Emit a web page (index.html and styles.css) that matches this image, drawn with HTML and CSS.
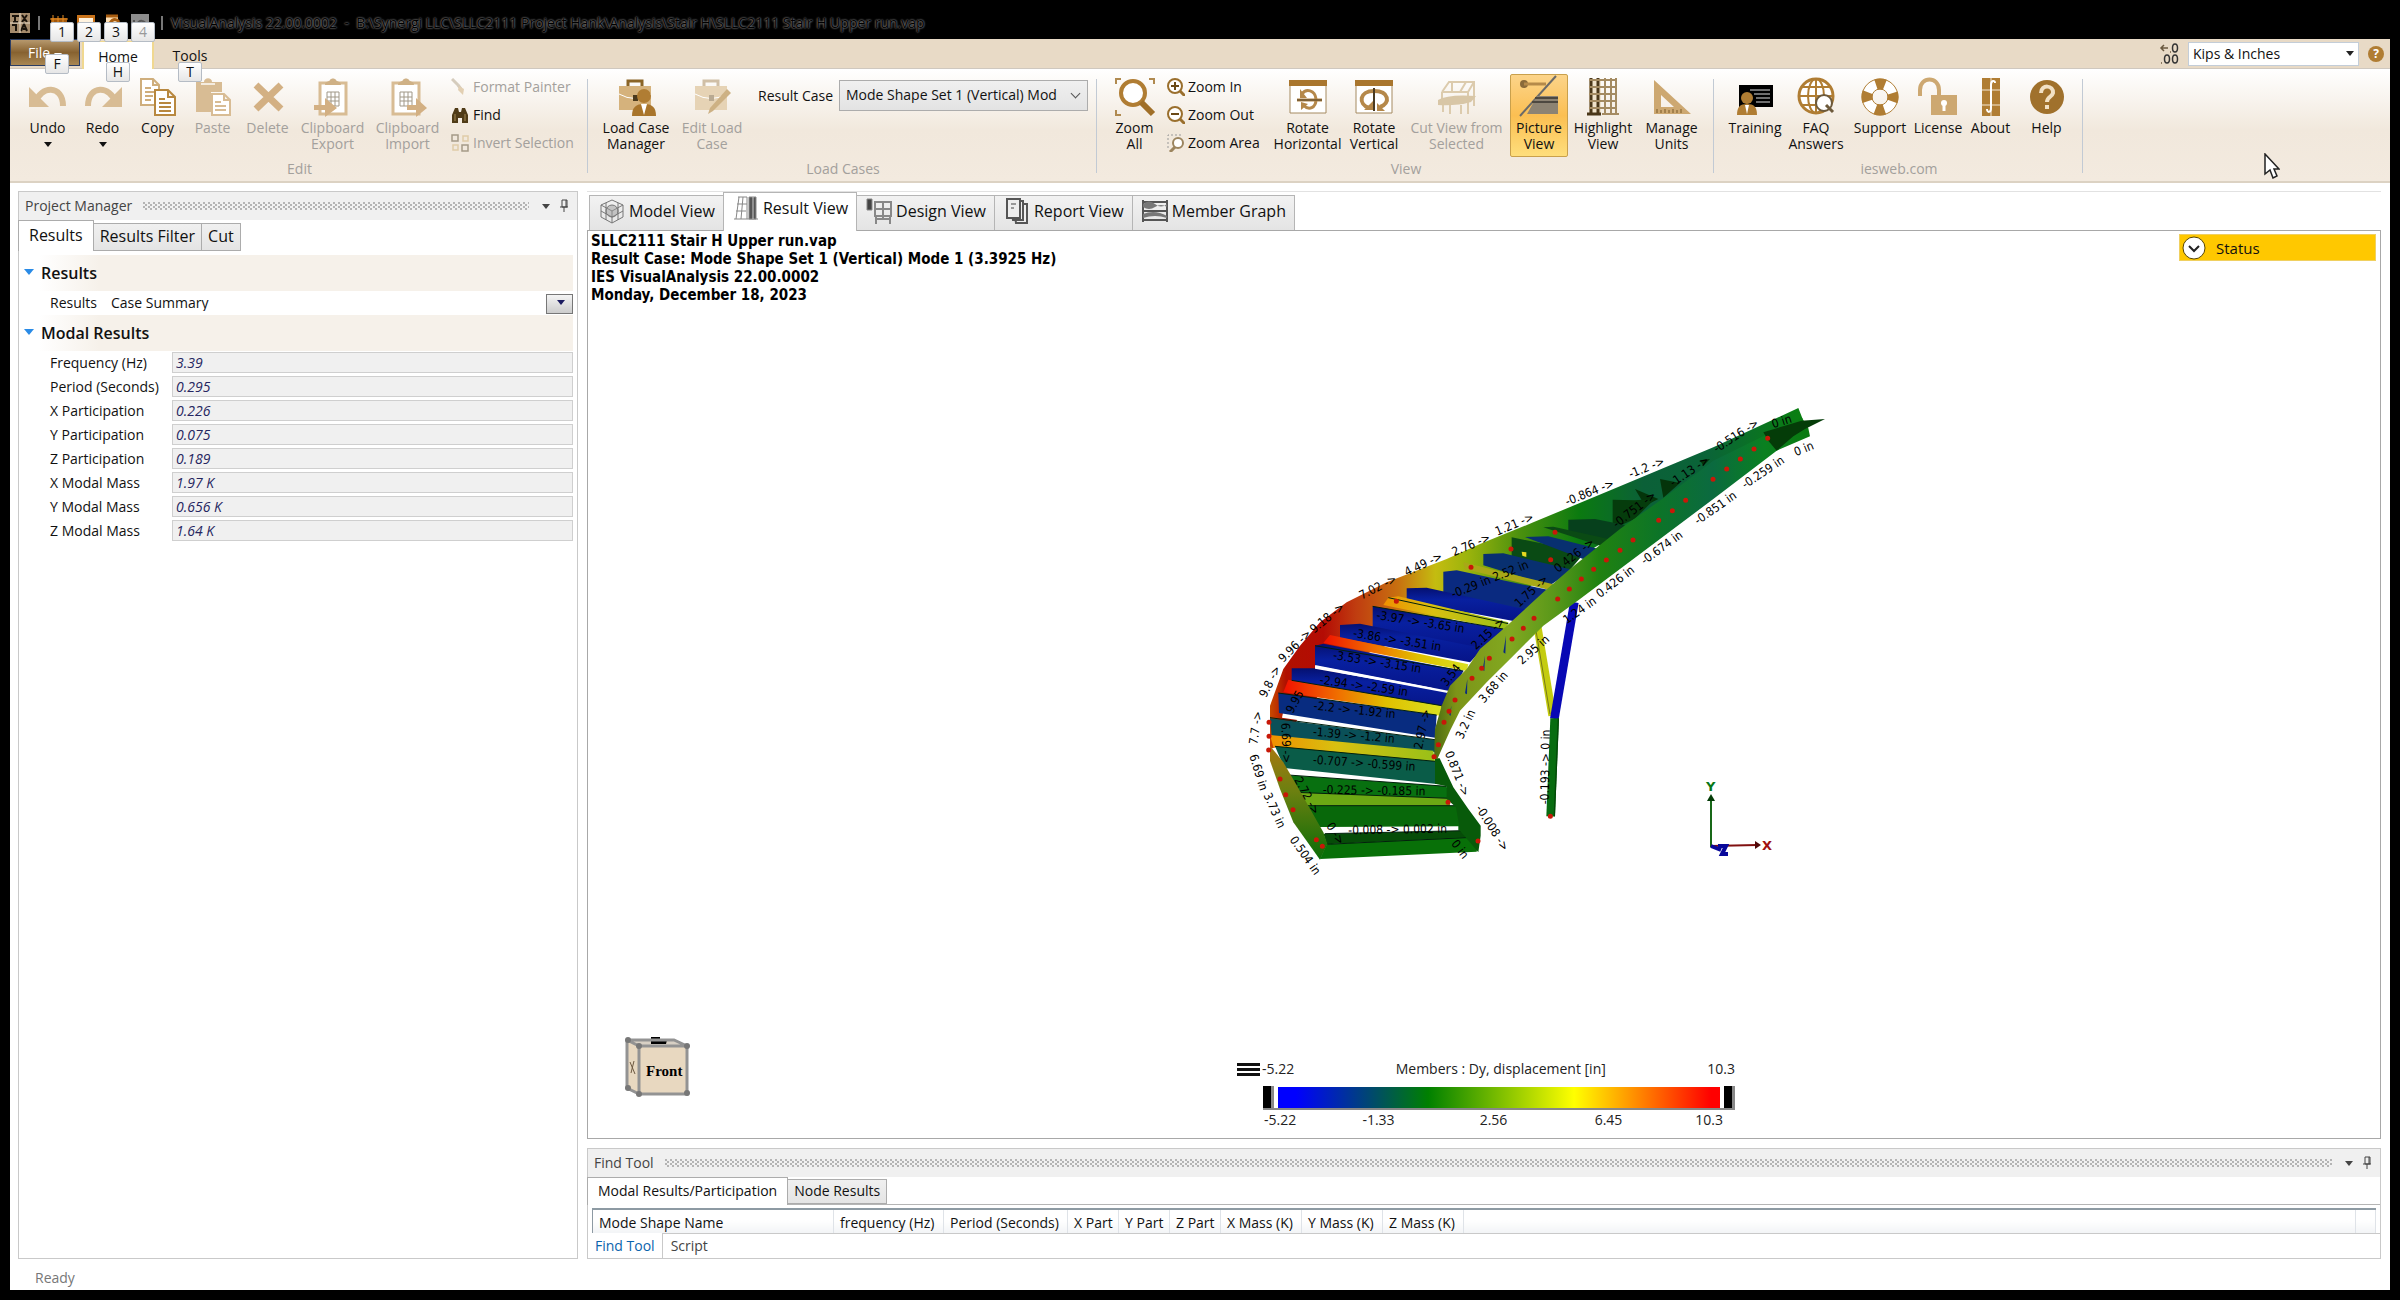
FILE: index.html
```html
<!DOCTYPE html>
<html lang="en">
<head>
    <meta charset="UTF-8">
    <meta name="viewport" content="width=device-width, initial-scale=1.0">
    <title>VisualAnalysis 22.00.0002</title>
    <link rel="stylesheet" href="styles.css">
</head>
<body>

<div class="app">
    <header class="titlebar">
        <svg class="app-logo" viewBox="0 0 20 20"><rect width="20" height="20" fill="#a58b6c"/><path d="M2 3h7M5 3v6M3 9h5M12 2l5 7M17 2l-5 7M2 12h4v6M11 18l3-7 3 7M13 16h3" stroke="#1a120a" stroke-width="2" fill="none"/><path d="M10 0v20M0 10h20" stroke="#e8d9c5" stroke-width="1"/></svg>
        <span class="bar"></span>
        <div class="quick">
            <button class="quick-btn" aria-label="New"><svg viewBox="0 0 18 18"><path d="M1 4h16v14H1z" fill="#a0570c"/><path d="M3 1v17M8 2v15M13 1v17M0 5h18M0 10h18" stroke="#e58d25" stroke-width="1"/></svg><kbd class="keytip">1</kbd></button>
            <button class="quick-btn" aria-label="Open"><svg viewBox="0 0 18 18"><path d="M0 1h18v15H0z" fill="#c9731a"/><path d="M2 4h14v12H2z" fill="#fff3df"/></svg><kbd class="keytip">2</kbd></button>
            <button class="quick-btn" aria-label="Save"><svg viewBox="0 0 18 18"><path d="M2 1h12v16H2z" fill="#ffe2b8"/><path d="M6 9c3-5 7-4 9-1M2 2h12" stroke="#a85d10" stroke-width="3" fill="none"/></svg><kbd class="keytip">3</kbd></button>
            <button class="quick-btn" aria-label="Undo" disabled><svg viewBox="0 0 18 18"><path d="M0 0h18v18H0z" fill="#8d8d8d"/><path d="M3 6v8h7M5 12c3-7 9-7 11 1" stroke="#555" stroke-width="2" fill="none"/></svg><kbd class="keytip dim">4</kbd></button>
        </div>
        <span class="bar"></span>
        <h1 class="caption">VisualAnalysis 22.00.0002 &nbsp;-&nbsp; B:\Synergi LLC\SLLC2111 Project Hank\Analysis\Stair H\SLLC2111 Stair H Upper run.vap</h1>
    </header>

    <nav class="ribbon-tabs">
        <button class="file-btn">File<i class="caret"></i><kbd class="keytip">F</kbd></button>
        <button class="ribbon-tab active">Home<kbd class="keytip">H</kbd></button>
        <button class="ribbon-tab">Tools<kbd class="keytip">T</kbd></button>
        <div class="unit-box">
            <svg class="decimals" viewBox="0 0 20 22"><path d="M9 5H2m3-3L2 5l3 3M2 20h1M11 9h1" stroke="#6b5a40" stroke-width="1.500" fill="none"/><ellipse cx="16" cy="5" rx="2.500" ry="4" stroke="#333" fill="none" stroke-width="1.500"/><ellipse cx="8" cy="16" rx="2.500" ry="4" stroke="#333" fill="none" stroke-width="1.500"/><ellipse cx="16" cy="16" rx="2.500" ry="4" stroke="#333" fill="none" stroke-width="1.500"/></svg>
            <span class="select units"><select aria-label="Units"><option>Kips &amp; Inches</option></select></span>
            <button class="tiny-help" aria-label="Help">?</button>
        </div>
    </nav>

    <section class="ribbon">
        <div class="group">
            <div class="tools tools-edit">
                <button class="tool"><svg viewBox="0 0 38 38"><path d="M0 9v20h20z" fill="#d8bc94"/><path d="M7 24C11 8 34 6 34 28" stroke="#d8bc94" stroke-width="6" fill="none"/></svg>Undo<i class="caret"></i></button>
                <button class="tool"><svg viewBox="0 0 38 38"><path d="M38 9v20H18z" fill="#d8bc94"/><path d="M31 24C27 8 4 6 4 28" stroke="#d8bc94" stroke-width="6" fill="none"/></svg>Redo<i class="caret"></i></button>
                <button class="tool"><svg viewBox="0 0 38 38"><g fill="#fff" stroke="#cfae7c" stroke-width="2"><path d="M2 1h12l6 6v20H2zM14 1v6h6"/><path d="M6 10h6M6 14h10M6 18h8M6 22h6"/></g><g fill="#fff" stroke="#b8883f" stroke-width="2"><path d="M16 12h13l7 7v18H16zM29 12v7h7"/><path d="M20 21h6M20 25h12M20 29h12M20 33h12"/></g></svg>Copy</button>
                <button class="tool" disabled><svg viewBox="0 0 38 38"><path d="M2 4h8c0-5 8-5 8 0h10v10H17v20H2z" fill="#d8bc94"/><path d="M7 6h14" stroke="#f4ece0" stroke-width="2"/><path d="M18 16h12l6 6v15H18zM30 16v6h6M21 24h6M21 28h11M21 32h11" fill="#fff" stroke="#d8bc94" stroke-width="2"/></svg>Paste</button>
                <button class="tool" disabled><svg viewBox="0 0 38 38"><path d="M7 7l25 24M32 7L7 31" stroke="#d3b083" stroke-width="7"/></svg>Delete</button>
                <button class="tool" disabled><svg viewBox="0 0 38 38"><path d="M6 5h26v31H6z" fill="#fff" stroke="#d8bc94" stroke-width="3"/><path d="M11 7c0-4 4-3 5-5 1-2 5-2 6 0s5 1 5 5z" fill="#cfb186"/><path d="M13 14h12v14H13zM17 14v14M21 14v14M13 19h12M13 23h12" stroke="#a09888" stroke-width="1" fill="none"/><path d="M0 27h11v-7l12 10-12 9v-7H0z" fill="#d3b083"/></svg>Clipboard<br>Export</button>
                <button class="tool" disabled><svg viewBox="0 0 38 38"><path d="M4 5h26v31H4z" fill="#fff" stroke="#d8bc94" stroke-width="3"/><path d="M9 7c0-4 4-3 5-5 1-2 5-2 6 0s5 1 5 5z" fill="#cfb186"/><path d="M11 14h12v14H11zM15 14v14M19 14v14M11 19h12M11 23h12" stroke="#a09888" stroke-width="1" fill="none"/><path d="M18 27h9v-7l11 10-11 9v-7h-9z" fill="#d3b083"/></svg>Clipboard<br>Import</button>
                <div class="stack">
                    <button class="mini" disabled><svg viewBox="0 0 18 18"><path d="M1 1l6 6M7 7l3 4" stroke="#d5ccbd" stroke-width="3"/><path d="M8 8l5 3-1 6-5-5z" fill="#e2cfb2"/></svg>Format Painter</button>
                    <button class="mini"><svg viewBox="0 0 18 18"><path d="M1 17V9l3-7h3l1 4h2l1-4h3l3 7v8h-6v-5H7v5z" fill="#4f3b17"/><path d="M4 8v7M14 8v7" stroke="#a58a55" stroke-width="1"/></svg>Find</button>
                    <button class="mini" disabled><svg viewBox="0 0 18 18" fill="none" stroke-width="1.500"><path d="M1 1h6v6H1zM11 11h6v6h-6z" stroke="#a59a88"/><path d="M12 2h5v5h-5zM2 11h5v5H2z" stroke="#e0cba8"/></svg>Invert Selection</button>
                </div>
            </div>
            <div class="group-name">Edit</div>
        </div>

        <div class="group">
            <div class="tools tools-load">
                <button class="tool"><svg viewBox="0 0 38 38"><path d="M11 8V3h14v5" stroke="#8a6426" stroke-width="3" fill="none"/><path d="M2 8h32v24H2z" fill="#d5b27c"/><path d="M2 16q16 9 32 0" stroke="#fff" stroke-width="1" fill="none"/><path d="M16 17h5v6h-5z" fill="#4b3a1d"/><circle cx="27" cy="18" r="7" fill="#b07d33"/><path d="M15 38c0-9 4-12 12-12s12 3 12 12z" fill="#a9752b"/><path d="M24 26h6l-3 11z" fill="#fff"/></svg>Load Case<br>Manager</button>
                <button class="tool" disabled><svg viewBox="0 0 38 38"><path d="M11 8V3h14v5" stroke="#d0bfa6" stroke-width="3" fill="none"/><path d="M2 8h32v24H2z" fill="#e6d3b5"/><path d="M2 16q16 9 32 0" stroke="#fff" stroke-width="1" fill="none"/><path d="M16 17h5v6h-5z" fill="#b9aa92"/><path d="M17 30L34 11l4 4-18 18-5 3z" fill="#cdb184"/></svg>Edit Load<br>Case</button>
                <div class="case-row">
                    <label for="result-case">Result Case</label>
                    <span class="select case"><select id="result-case"><option>Mode Shape Set 1 (Vertical) Mod</option></select></span>
                </div>
            </div>
            <div class="group-name">Load Cases</div>
        </div>

        <div class="group">
            <div class="tools tools-view">
                <button class="tool"><svg viewBox="0 0 38 38"><path d="M0 6V1h5M33 1h5v5M0 32v5h5" stroke="#b08a50" stroke-width="2" fill="none"/><circle cx="17" cy="15" r="12" fill="#fff" stroke="#b07d33" stroke-width="4"/><path d="M25 24l12 12" stroke="#a06f28" stroke-width="6"/></svg>Zoom<br>All</button>
                <div class="stack stack-zoom">
                    <button class="mini"><svg viewBox="0 0 18 18"><circle cx="8" cy="8" r="7" fill="#fff" stroke="#9a6f2d" stroke-width="2"/><path d="M4 8h8M8 4v8" stroke="#6b4a18" stroke-width="2"/><path d="M13 13l5 5" stroke="#9a6f2d" stroke-width="3"/></svg>Zoom In</button>
                    <button class="mini"><svg viewBox="0 0 18 18"><circle cx="8" cy="8" r="7" fill="#fff" stroke="#9a6f2d" stroke-width="2"/><path d="M4 8h8" stroke="#6b4a18" stroke-width="2"/><path d="M13 13l5 5" stroke="#9a6f2d" stroke-width="3"/></svg>Zoom Out</button>
                    <button class="mini"><svg viewBox="0 0 18 18"><path d="M1 14V1h13" stroke="#999" stroke-dasharray="2 2" fill="none"/><circle cx="11" cy="9" r="5" fill="#fff" stroke="#9c855f" stroke-width="2"/><path d="M8 13l-5 5" stroke="#9c855f" stroke-width="3"/></svg>Zoom Area</button>
                </div>
                <button class="tool"><svg viewBox="0 0 38 38"><path d="M1 3h36v32H1z" fill="#fff" stroke="#a58a60" stroke-width="1"/><path d="M0 2h38v6H0z" fill="#a9762e"/><path d="M13 16c4-6 13-4 14 5 0 9-7 12-13 6M8 22h25" stroke="#b5884a" stroke-width="3" fill="none"/><path d="M11 11v9h7zM12 24v8l7-6z" fill="#b5884a"/><path d="M8 22h25" stroke="#4a3a20" stroke-width="1"/></svg>Rotate<br>Horizontal</button>
                <button class="tool"><svg viewBox="0 0 38 38"><path d="M1 3h36v32H1z" fill="#fff" stroke="#a58a60" stroke-width="1"/><path d="M0 2h38v6H0z" fill="#a9762e"/><path d="M14 30C3 26 4 13 19 13s17 12 6 16" stroke="#b5884a" stroke-width="4" fill="none"/><path d="M9 32h9v-9zM22 25v8h8z" fill="#b5884a"/><path d="M19 10v23" stroke="#4a3a20" stroke-width="2"/></svg>Rotate<br>Vertical</button>
                <button class="tool" disabled><svg viewBox="0 0 38 38"><path d="M4 14L11 4h25v24M4 14h26V36M14 14V4M22 14L28 4M30 14l6-10M4 14v8M5 26v8M12 27v9M23 27v9" stroke="#dccbad" stroke-width="2" fill="none"/><path d="M0 22q10-6 38-4l-5 6q-14 4-33 3z" fill="#d8c6a6"/></svg>Cut View from<br>Selected</button>
                <button class="tool selected"><svg viewBox="0 0 38 38"><circle cx="4" cy="6" r="4" fill="#8a6a3a"/><path d="M4 6h22" stroke="#b58a4a" stroke-width="3"/><path d="M0 38L36-2" stroke="#6b6a68" stroke-width="2"/><path d="M17 18h21v18H7z" fill="#8d8373"/><path d="M15 20h23M12 24h26" stroke="#4d4840" stroke-width="2"/></svg>Picture<br>View</button>
                <button class="tool"><svg viewBox="0 0 38 38"><path d="M5 1h12v35H5z" fill="#efe2ca"/><path d="M7 0v37M14 0v37M3 36h14" stroke="#4a3719" stroke-width="3"/><path d="M21 0v37M27 0v37M32 0v36M5 2h28M5 9h28M5 16h28M5 23h28M5 30h28M18 36h17" stroke="#a48b62" stroke-width="2"/></svg>Highlight<br>View</button>
                <button class="tool"><svg viewBox="0 0 38 38"><path d="M1 2l37 34H1zM8 17v12h13z" fill="#cda871" fill-rule="evenodd"/><path d="M4 35v-4M8 35v-3M12 35v-4M16 35v-3M20 35v-4M24 35v-3M28 35v-4" stroke="#7a5a28" stroke-width="1"/></svg>Manage<br>Units</button>
            </div>
            <div class="group-name">View</div>
        </div>

        <div class="group">
            <div class="tools tools-web">
                <button class="tool"><svg viewBox="0 0 38 38"><path d="M3 7h34v22H3z" fill="#000"/><path d="M14 12h20M18 16h16M20 20h14M20 24h14" stroke="#ddd" stroke-width="1"/><circle cx="11" cy="20" r="6" fill="#b07d33"/><path d="M1 37c0-8 3-11 10-11s10 3 10 11z" fill="#b07d33"/><path d="M9 27h4l-2 9z" fill="#fff"/></svg>Training</button>
                <button class="tool"><svg viewBox="0 0 38 38"><g fill="none" stroke="#b07d33" stroke-width="2"><circle cx="19" cy="18" r="17" fill="#fff" stroke-width="3"/><ellipse cx="19" cy="18" rx="8" ry="17"/><path d="M19 1v34M2 18h34M5 9h28M5 27h28"/></g><circle cx="27" cy="25" r="8" fill="#fff" stroke="#6d5a3c" stroke-width="2"/><path d="M29 27l7 7" stroke="#6d5a3c" stroke-width="3"/></svg>FAQ<br>Answers</button>
                <button class="tool"><svg viewBox="0 0 38 38"><circle cx="19" cy="19" r="13" fill="none" stroke="#fff" stroke-width="11"/><circle cx="19" cy="19" r="13" fill="none" stroke="#b07d33" stroke-width="11" stroke-dasharray="9 11.420" stroke-dashoffset="4.500"/><circle cx="19" cy="19" r="18" fill="none" stroke="#b07d33"/><circle cx="19" cy="19" r="8" fill="none" stroke="#b07d33"/></svg>Support</button>
                <button class="tool"><svg viewBox="0 0 38 38"><path d="M1 18v-6C1-2 20-2 20 12v6" stroke="#cda871" stroke-width="4" fill="none"/><path d="M12 17h26v20H12z" fill="#cda871"/><circle cx="25" cy="25" r="3" fill="#fff"/><path d="M25 25v8" stroke="#fff" stroke-width="3"/></svg>License</button>
                <button class="tool"><svg viewBox="0 0 38 38"><path d="M10 0h18v38H10z" fill="#b07d33"/><path d="M10 12h18M10 27h18M19 0v38" stroke="#f3e8d5" stroke-width="1"/><path d="M23 5c0-3-4-3-4 2v23c0 5-4 5-4 1" stroke="#fff" stroke-width="2" fill="none"/></svg>About</button>
                <button class="tool"><svg viewBox="0 0 38 38"><circle cx="19" cy="19" r="17" fill="#a0712c"/><path d="M13 15c0-9 13-8 12 0-1 4-6 4-6 9M19 27v4" stroke="#f1e0c4" stroke-width="4" fill="none"/></svg>Help</button>
            </div>
            <div class="group-name">iesweb.com</div>
        </div>
        <svg class="pointer" viewBox="0 0 16 26"><path d="M1 1v20l5-4 3 8 4-2-3-7h5z" fill="#fff" stroke="#222" stroke-width="1.500"/></svg>
    </section>

    <main class="workspace">
        <aside class="panel project">
            <div class="panel-head"><span>Project Manager</span><i class="grip"></i><i class="caret"></i><svg class="pin" viewBox="0 0 10 14"><path d="M3 1h5v7H3zM7 1v7M1 8h8M5 8v5" stroke="#444" fill="none"/></svg></div>
            <div class="tabs">
                <button class="tab active">Results</button>
                <button class="tab">Results Filter</button>
                <button class="tab">Cut</button>
            </div>
            <h2 class="section">Results</h2>
            <div class="summary-row">
                <label for="summary">Results</label>
                <span class="select summary"><select id="summary"><option>Case Summary</option></select></span>
            </div>
            <h2 class="section">Modal Results</h2>
            <div class="props">
                <label for="p1">Frequency (Hz)</label><input id="p1" value="3.39" readonly>
                <label for="p2">Period (Seconds)</label><input id="p2" value="0.295" readonly>
                <label for="p3">X Participation</label><input id="p3" value="0.226" readonly>
                <label for="p4">Y Participation</label><input id="p4" value="0.075" readonly>
                <label for="p5">Z Participation</label><input id="p5" value="0.189" readonly>
                <label for="p6">X Modal Mass</label><input id="p6" value="1.97 K" readonly>
                <label for="p7">Y Modal Mass</label><input id="p7" value="0.656 K" readonly>
                <label for="p8">Z Modal Mass</label><input id="p8" value="1.64 K" readonly>
            </div>
        </aside>

        <div class="main">
            <div class="view-tabs">
                <button class="view-tab"><svg viewBox="0 0 26 26" fill="none" stroke="#777"><path d="M2 7l11-5 11 5v12l-11 6-11-6zM2 7l11 6 11-6M13 13v12M7 5v17M19 5v17M2 13l11 6 11-6" /><circle cx="13" cy="13" r="6" fill="#999" fill-opacity=".5"/></svg>Model View</button>
                <button class="view-tab active"><svg viewBox="0 0 26 26" fill="none" stroke="#888"><path d="M5 2h9M4 9h10M3 16h10M1 24h24M6 2L3 24M10 2L8 24M14 2v22"/><path d="M16 2h7v22h-7z" fill="#555"/><path d="M20 2v22" stroke="#ccc"/></svg>Result View</button>
                <button class="view-tab"><svg viewBox="0 0 26 26" fill="none" stroke="#888"><path d="M1 1h5v11H1z" fill="#444"/><path d="M9 4h16v14H9zM17 4v14M9 11h16M9 21h16M10 18v8M24 18v8M17 18v3" stroke-width="2"/></svg>Design View</button>
                <button class="view-tab"><svg viewBox="0 0 26 26" fill="#eee" stroke="#555" stroke-width="2"><path d="M9 6h14v19H12z"/><path d="M6 3h13v19H9z"/><path d="M3 1h13v19H3z"/><path d="M7 6h5M7 10h3" stroke="#999"/></svg>Report View</button>
                <button class="view-tab"><svg viewBox="0 0 26 26" fill="none" stroke="#555" stroke-width="2"><path d="M1 2v22M25 2v22M1 4h24M1 13h24M1 22h24"/><path d="M1 6q6-5 12 0t12 0v3q-6-4-12 0T1 9zM1 16q12-5 24 2v2q-12-4-24 0z" fill="#777" stroke="none"/></svg>Member Graph</button>
            </div>

            <div class="viewer">
                <p class="report">SLLC2111 Stair H Upper run.vap<br>Result Case: Mode Shape Set 1 (Vertical) Mode 1 (3.3925 Hz)<br>IES VisualAnalysis 22.00.0002<br>Monday, December 18, 2023</p>
                <button class="status-drop"><svg viewBox="0 0 24 24"><circle cx="12" cy="12" r="11" fill="#fff" stroke="#554400"/><path d="M7 10l5 5 5-5" stroke="#222" stroke-width="2" fill="none"/></svg>Status</button>

                <svg class="model" viewBox="60 -510 1800 1500">
                    <defs>
                        <linearGradient id="outer" gradientUnits="userSpaceOnUse" x1="150" y1="0" x2="1750" y2="0">
                            <stop offset="0" stop-color="#c84a00"/><stop offset=".03" stop-color="#b01000"/><stop offset=".1" stop-color="#b40c04"/><stop offset=".16" stop-color="#c03c10"/><stop offset=".24" stop-color="#c87010"/><stop offset=".31" stop-color="#c4bc10"/><stop offset=".37" stop-color="#9cb40c"/><stop offset=".47" stop-color="#4a900e"/><stop offset=".58" stop-color="#0b7a10"/><stop offset=".7" stop-color="#0b6038"/><stop offset=".82" stop-color="#0a6438"/><stop offset="1" stop-color="#0a8010"/>
                        </linearGradient>
                        <linearGradient id="inner" gradientUnits="userSpaceOnUse" x1="640" y1="0" x2="1770" y2="0">
                            <stop offset="0" stop-color="#4c6a10"/><stop offset=".06" stop-color="#7c9418"/><stop offset=".2" stop-color="#82a820"/><stop offset=".32" stop-color="#5a981a"/><stop offset=".44" stop-color="#208210"/><stop offset=".6" stop-color="#0c7428"/><stop offset=".74" stop-color="#0b6a40"/><stop offset=".88" stop-color="#0a8020"/><stop offset="1" stop-color="#0a7a10"/>
                        </linearGradient>
                        <linearGradient id="low" x1="0" y1="0" x2="0" y2="1"><stop offset="0" stop-color="#a87810"/><stop offset=".4" stop-color="#6c8010"/><stop offset="1" stop-color="#0a6c08"/></linearGradient>
                        <linearGradient id="hot" x1="0" x2="1"><stop offset="0" stop-color="#f01000"/><stop offset=".35" stop-color="#f07000"/><stop offset=".65" stop-color="#e0c000"/><stop offset="1" stop-color="#d8e020"/></linearGradient>
                        <linearGradient id="warm" x1="0" x2="1"><stop offset="0" stop-color="#f09000"/><stop offset=".4" stop-color="#d8c010"/><stop offset="1" stop-color="#98c018"/></linearGradient>
                        <linearGradient id="blue" x1="0" x2="0" y1="0" y2="1"><stop offset="0" stop-color="#051070"/><stop offset=".35" stop-color="#0820a0"/><stop offset="1" stop-color="#061488"/></linearGradient>
                    </defs>

                    <!-- legs -->
                    <path d="M952 200L997 470" stroke="#c4cc10" stroke-width="24"/>
                    <path d="M948 215L990 465" stroke="#777a18" stroke-width="3"/>
                    <path d="M1063 130L1003 480" stroke="#0808b4" stroke-width="26"/>
                    <path d="M1004 478L992 772" stroke="#086c10" stroke-width="26"/>
                    <path d="M1015 478L1003 772" stroke="#044808" stroke-width="4"/>

                    <path fill="url(#outer)" d="M150 570L150 440L190 330L240 260L300 190L380 130L500 70L680 0L780 -45L940 -110L1180 -210L1480 -335L1735 -453L1748 -420L1480 -290L1200 -80L900 100L700 180L400 300L240 470L180 560z"/>

                    <!-- far treads -->
                    <path fill="#04340a" d="M1320 -240l60 12 -50 44zM1245 -210l70 30 -40 20zM1440 -296l30 -4 -20 20z"/>
                    <path fill="#053c0c" d="M1178 -178l66 2 60 -4 -60 60 -66 30z"/>
                    <path fill="#06401c" d="M1045 -118l80 -2 90 18 -40 50 -130 -30z"/>
                    <path fill="#0a4a14" d="M970 -95l30 -2 180 40 -30 20zM875 -65l220 45 -60 70 -160 -50z"/>
                    <path fill="#083070" d="M915 -66l70 -2 160 40 -50 30zM790 -15l60 -2 210 50 -70 46 -200 -60z"/>
                    <path fill="#a8a818" d="M730 10l270 66 -15 16 -250 -62z"/>
                    <path fill="#0a2a80" d="M670 38l40 -4 280 60 -65 66 -255 -56z"/>
                    <path fill="url(#blue)" d="M560 88l60 -2 300 66 -40 34 -320 -60z"/>
                    <path fill="url(#warm)" d="M505 116l30 -4 330 78 -5 24 -370 -76z"/>
                    <path fill="url(#blue)" d="M458 142l392 68 -60 70 -332 -68z"/>
                    <path fill="url(#blue)" d="M360 198l60 -4 370 74 -40 42 -390 -74z"/>
                    <path fill="url(#hot)" d="M330 228l415 88 -5 20 -430 -84z"/>
                    <path fill="#fff" d="M285 316l410 82 -10 4 -398 -76z"/>
                    <path fill="url(#blue)" d="M285 260l25 -6 420 82 -30 62 -415 -80z"/>
                    <path fill="url(#blue)" d="M215 328l70 0 410 76 -30 42 -450 -78z"/>
                    <path fill="#fff" d="M285 320l350 66v5l-350 -62z"/>
                    <path fill="url(#hot)" d="M205 362l460 78 -5 30 -470 -70z"/>
                    <path fill="#fff" d="M190 456l455 76 -1 12 -458 -68z"/>
                    <path fill="#082c80" d="M175 402l475 66 -5 68 -468 -74z"/>
                    <path fill="#0a5058" d="M150 478l495 64v38l-490 -50z"/>
                    <path fill="url(#warm)" d="M150 528l490 47 5 32 -485 -42z"/>
                    <path fill="#fff" d="M196 624l449 50 -1 6 -446 -30z"/>
                    <path fill="#0a5c48" d="M165 562l480 45 5 68 -457 -48z"/>
                    <path fill="#087010" d="M200 648l480 34 8 38 -460 -14z"/>
                    <path fill="#6ca814" d="M225 700l465 18v25l-445 -3z"/>
                    <path fill="#08680a" d="M245 740h465l60 76 -470 -12z"/>
                    <path fill="#fff" d="M305 804l410 -2v14l-405 8z"/>
                    <path fill="#064c08" d="M310 824l470 -10v20l-460 22z"/>
                    <path fill="#087008" d="M320 856l458 -24 -8 46 -470 22z"/>
                    <path d="M150 476l495 66M175 402l475 66M215 364l450 76M285 260l445 76M165 562l480 45M205 648l475 34M250 740h460M458 142l392 68M505 116l360 78M225 700l465 18M315 824l465 -10M320 856l458 -22" stroke="#02200c" stroke-width="3" fill="none"/>

                    <!-- stringers -->
                    <path fill="#085a0a" d="M645 598L659 598L700 685L745 750L782 800L782 830L775 880L720 815L708 745L680 720L680 682L645 674z"/>
                    <path fill="url(#low)" d="M150 560L190 610L245 705L310 820L322 856L300 902L220 790L180 690L150 605z"/>
                    <path fill="url(#inner)" d="M1745 -425L1480 -295L1340 -190L1200 -90L1050 30L970 100L850 210L780 270L740 330L690 380L665 440L645 510L642 600L652 600L690 515L720 455L800 370L880 290L970 200L1080 120L1280 -30L1480 -180L1670 -325L1770 -368L1765 -392z"/>
                    <path fill="#043c08" d="M1630 -380L1745 -415L1815 -420L1755 -390L1720 -368L1670 -325L1645 -355z"/>
                    <path fill="#0a2a80" d="M858 230l-2 54 -6 -4zM795 290l-2 46 -5 -4zM742 360l-1 46 -6 -3zM694 440l-2 30 -4 -2z"/>

                    <path class="nodes" d="M1048 90h.1M1013 120h.1M942 178h.1M910 208h.1M876 240h.1M808 298h.1M785 328h.1M756 358h.1M705 423h.1M687 457h.1M672 490h.1M655 557h.1M642 593h.1M147 490h.1M147 532h.1M146 573h.1M180 660h.1M197 707h.1M219 752h.1M289 842h.1M307 862h.1M684 730h.1M774 846h.1M529 127h.1M753 25h.1M1643 -362h.1M1602 -330h.1M1561 -300h.1M1520 -270h.1M1479 -239h.1M1397 -176h.1M1357 -145h.1M1316 -116h.1M1239 -57h.1M1200 -26h.1M1159 3h.1M1121 31h.1M1084 60h.1M873 -30h.1M992 2h.1M1005 -80h.1M991 772h.1"/>
                    <path d="M905 -22l14 2v14l-12 -4z" fill="#e8d820"/>

                    <g class="labels">
                        <text transform="translate(702 -8) rotate(-23)">2.76 -&gt;</text>
                        <text transform="translate(832 -70) rotate(-23)">1.21 -&gt;</text>
                        <text transform="translate(1042 -160) rotate(-22)">-0.864 -&gt;</text>
                        <text transform="translate(1232 -242) rotate(-22)">-1.2 -&gt;</text>
                        <text transform="translate(1490 -318) rotate(-33)">-0.516 -&gt;</text>
                        <text transform="translate(1660 -392) rotate(-18)">0 in</text>
                        <text transform="translate(560 52) rotate(-25)">4.49 -&gt;</text>
                        <text transform="translate(425 122) rotate(-27)">7.02 -&gt;</text>
                        <text transform="translate(282 224) rotate(-39)">9.18 -&gt;</text>
                        <text transform="translate(190 312) rotate(-45)">9.96 -&gt;</text>
                        <text transform="translate(138 418) rotate(-63)">9.8 -&gt;</text>
                        <text transform="translate(112 558) rotate(-82)">7.7 -&gt;</text>
                        <text transform="translate(88 590) rotate(73)">6.69 in</text>
                        <text transform="translate(130 708) rotate(66)">3.73 in</text>
                        <text transform="translate(208 842) rotate(55)">0.504 in</text>
                        <text transform="translate(766 748) rotate(58)">-0.008 -&gt;</text>
                        <text transform="translate(674 582) rotate(68)">0.871 -&gt;</text>
                        <text transform="translate(728 542) rotate(-65)">3.2 in</text>
                        <text transform="translate(792 434) rotate(-49)">3.68 in</text>
                        <text transform="translate(906 318) rotate(-41)">2.95 in</text>
                        <text transform="translate(1040 196) rotate(-35)">1.24 in</text>
                        <text transform="translate(1140 118) rotate(-37)">0.426 in</text>
                        <text transform="translate(1274 18) rotate(-36)">-0.674 in</text>
                        <text transform="translate(1434 -102) rotate(-35)">-0.851 in</text>
                        <text transform="translate(1576 -210) rotate(-34)">-0.259 in</text>
                        <text transform="translate(1728 -308) rotate(-22)">0 in</text>
                        <text transform="translate(986 736) rotate(-89)">-0.193 -&gt; 0 in</text>
                        <text transform="translate(1360 -216) rotate(-34)">-1.13 -&gt;</text>
                        <text transform="translate(1190 -92) rotate(-38)">-0.751 -&gt;</text>
                        <text transform="translate(1014 42) rotate(-38)">0.426 -&gt;</text>
                        <text transform="translate(898 146) rotate(-43)">1.75 -&gt;</text>
                        <text transform="translate(768 274) rotate(-43)">2.15 -&gt;</text>
                        <text transform="translate(700 118) rotate(-22)">-0.29 in 2.52 in</text>
                        <text transform="translate(468 180) rotate(9)">-3.97 -&gt; -3.65 in</text>
                        <text transform="translate(398 234) rotate(9)">-3.86 -&gt; -3.51 in</text>
                        <text transform="translate(338 300) rotate(9)">-3.53 -&gt; -3.15 in</text>
                        <text transform="translate(298 374) rotate(8)">-2.94 -&gt; -2.59 in</text>
                        <text transform="translate(280 452) rotate(6)">-2.2 -&gt; -1.92 in</text>
                        <text transform="translate(278 530) rotate(5)">-1.39 -&gt; -1.2 in</text>
                        <text transform="translate(278 614) rotate(4)">-0.707 -&gt; -0.599 in</text>
                        <text transform="translate(308 704) rotate(1)">-0.225 -&gt; -0.185 in</text>
                        <text transform="translate(385 826) rotate(-1)">-0.008 -&gt; 0.002 in</text>
                        <text transform="translate(218 466) rotate(-62)">9.95</text>
                        <text transform="translate(184 492) rotate(88)">6.69 -&gt;</text>
                        <text transform="translate(606 572) rotate(-78)">2.97 -&gt;</text>
                        <text transform="translate(680 384) rotate(-52)">3.54</text>
                        <text transform="translate(222 662) rotate(62)">2.72 -&gt;</text>
                        <text transform="translate(318 800) rotate(58)">0 -&gt;</text>
                        <text transform="translate(692 854) rotate(52)">0 in</text>
                    </g>
                </svg>

                <svg class="axes" viewBox="0 0 70 80">
                    <path d="M12 67V18" stroke="#186818" stroke-width="2"/><path d="M8 21l4-7 4 7z" fill="#043c08"/>
                    <path d="M12 66l46-1" stroke="#801010" stroke-width="2"/><path d="M56 61l6 4-6 4z" fill="#500808"/>
                    <path d="M12 66l10 4M19 66h8l-4 8h6" stroke="#08089a" stroke-width="4" fill="none"/>
                    <text x="7" y="11" fill="#087818">Y</text><text x="63" y="70" fill="#a01010">X</text>
                </svg>

                <svg class="cube" viewBox="0 0 66 64">
                    <path d="M14 10h48v48H14zM2 4l12 6v48L2 52z" fill="#e8d8c0"/>
                    <path d="M2 4h47l13 6H14z" fill="#d8d0c4"/>
                    <path d="M26 1h9v3h7l-1 4H26z" fill="#000"/>
                    <path d="M14 10h48v48H14zM2 4l12 6M2 4v48l12 6M2 4h47l13 6" fill="none" stroke="#939393" stroke-width="3"/>
                    <g fill="#777"><circle cx="14" cy="10" r="3"/><circle cx="62" cy="10" r="3"/><circle cx="14" cy="58" r="3"/><circle cx="62" cy="57" r="3"/><circle cx="3" cy="4" r="3"/><circle cx="3" cy="52" r="3"/></g>
                    <path d="M5 26l5 12M9 25l-3 12" stroke="#6d5840" stroke-width="1"/>
                    <text x="21" y="40">Front</text>
                </svg>

                <div class="legend">
                    <div class="legend-top"><i class="menu-lines"></i><span>-5.22</span><strong>Members : Dy, displacement [in]</strong><span>10.3</span></div>
                    <div class="legend-bar"><i class="stop"></i><i class="ramp"></i><i class="stop"></i></div>
                    <div class="legend-scale"><span>-5.22</span><span>-1.33</span><span>2.56</span><span>6.45</span><span>10.3</span></div>
                </div>
            </div>

            <section class="panel find">
                <div class="panel-head"><span>Find Tool</span><i class="grip"></i><i class="caret"></i><svg class="pin" viewBox="0 0 10 14"><path d="M3 1h5v7H3zM7 1v7M1 8h8M5 8v5" stroke="#444" fill="none"/></svg></div>
                <div class="tabs">
                    <button class="tab active">Modal Results/Participation</button>
                    <button class="tab">Node Results</button>
                </div>
                <table class="grid">
                    <colgroup><col class="c-name"><col class="c-freq"><col class="c-period"><col class="c-part"><col class="c-part"><col class="c-part"><col class="c-mass"><col class="c-mass"><col class="c-mass"><col><col class="c-bar"></colgroup>
                    <thead><tr><th>Mode Shape Name</th><th>frequency (Hz)</th><th>Period (Seconds)</th><th>X Part</th><th>Y Part</th><th>Z Part</th><th>X Mass (K)</th><th>Y Mass (K)</th><th>Z Mass (K)</th><th></th><th></th></tr></thead>
                </table>
                <div class="dock-tabs"><button class="dock-tab active">Find Tool</button><button class="dock-tab">Script</button></div>
            </section>
        </div>
    </main>

    <footer class="statusbar">Ready</footer>
</div>

</body>
</html>
```
FILE: styles.css
```css
:root {
    --sand: #e8dac6;
    --line: #c9c9c9;
    --gold: #b07d33;
    --muted: #a3a09c;
}
* { box-sizing: border-box; }
body {
    margin: 0;
    background: #000;
    color: #111;
    font-family: "Open Sans", "Noto Sans", sans-serif;
    font-size: 14px;
    line-height: 16px;
}
button, select, input { font: inherit; color: inherit; }
button { background: none; border: 0; padding: 0; }
.app {
    display: flex;
    flex-direction: column;
    min-height: 100vh;
    padding: 0 10px 10px;
}

/* title bar */
.titlebar { display: flex; align-items: center; height: 39px; padding-top: 6px; }
.app-logo { width: 20px; height: 20px; }
.bar { width: 2px; height: 14px; margin: 0 8px; background: #777; }
.quick { display: flex; gap: 9px; margin: 0 4px 0 2px; }
.quick-btn { position: relative; width: 18px; height: 18px; }
.quick-btn svg { display: block; width: 18px; height: 18px; }
.caption {
    margin: 0;
    font-size: 14px;
    font-weight: normal;
    color: #000;
    text-shadow: 0 0 2px #999, 0 0 2px #777;
}
.keytip {
    position: absolute;
    z-index: 2;
    top: 8px;
    left: 0;
    width: 24px;
    height: 20px;
    background: linear-gradient(#fff, #e6e6e6);
    border: 1px solid #b5bcc5;
    border-radius: 2px;
    color: #111;
    font: inherit;
    line-height: 18px;
    text-align: center;
    text-shadow: none;
}
.keytip.dim { color: #999; }

/* ribbon tabs */
.ribbon-tabs { display: flex; height: 30px; background: var(--sand); border-bottom: 1px solid #cfc8bf; }
.file-btn {
    position: relative;
    width: 70px;
    margin-bottom: 2px;
    background: linear-gradient(#b6986d, #876230 50%, #a98752);
    border: 1px solid #2b3d63;
    color: #fff;
}
.file-btn .keytip { top: 14px; left: 34px; }
.file-btn .caret { color: #fff; margin-left: 4px; }
.ribbon-tab { position: relative; width: 72px; padding-top: 4px; font-size: 14px; }
.ribbon-tab.active {
    margin: 2px 0 -1px 2px;
    background: #fff;
    border: solid #f0d890;
    border-width: 1px 2px 0;
    padding-top: 2px;
}
.ribbon-tab .keytip { top: 23px; left: 24px; }
.ribbon-tab.active .keytip { top: 20px; left: 22px; }
.caret {
    display: inline-block;
    border: 4px solid transparent;
    border-top: 5px solid currentColor;
    border-bottom: 0;
}
.unit-box { display: flex; align-items: center; gap: 9px; margin-left: auto; padding-right: 6px; }
.decimals { width: 20px; height: 22px; }
.select { position: relative; display: inline-block; }
.select select { width: 100%; height: 100%; appearance: none; border: 1px solid #c3cdd8; background: #fff; padding: 0 8px; }
.select::after {
    content: "";
    position: absolute;
    right: 5px;
    top: 9px;
    border: 4px solid transparent;
    border-top: 5px solid #222;
    border-bottom: 0;
    pointer-events: none;
}
.units { width: 171px; height: 24px; }
.units select { padding: 0 4px; }
.tiny-help { width: 16px; height: 16px; border-radius: 50%; background: var(--gold); color: #fff; font-size: 12px; font-weight: bold; line-height: 16px; }

/* ribbon */
.ribbon {
    position: relative;
    display: flex;
    height: 114px;
    background: linear-gradient(#fff, #f1e8dc 55%, #f3eadf);
    border-bottom: 2px solid #dcd2c3;
}
.group { position: relative; padding: 5px 9px 0 10px; }
.group::after {
    content: "";
    position: absolute;
    top: 10px;
    right: 0;
    width: 1px;
    height: 94px;
    background: #c2cad4;
}
.tools { display: grid; height: 87px; align-items: start; }
.tools-edit { grid-template-columns: repeat(5, 55px) repeat(2, 75px) 134px; }
.tools-load { grid-template-columns: repeat(2, 76px) 338px; }
.tools-view { grid-template-columns: 55px 108px 75px 58px 107px 58px 70px 67px; }
.tools-web { grid-template-columns: 62px 60px 68px 48px 57px 55px; }
.tool { display: flex; flex-direction: column; align-items: center; height: 83px; padding-top: 4px; line-height: 16px; text-align: center; white-space: nowrap; }
.tool br { display: block; }
.tool svg { display: block; flex: none; width: 38px; height: 38px; margin-bottom: 4px; overflow: visible; }
.tool .caret { margin-top: 6px; }
button:disabled { color: var(--muted); }
.tool.selected {
    background: linear-gradient(#fcd48a, #fbbf52 50%, #fede7c);
    border: 1px solid #c9a04c;
    border-radius: 2px;
    padding-top: 3px;
}
.stack { display: grid; gap: 10px; padding: 4px 0 0 6px; justify-items: start; }
.mini { display: flex; align-items: center; gap: 4px; height: 18px; white-space: nowrap; }
.mini svg { width: 18px; height: 18px; }
.stack-zoom { padding-left: 5px; }
.stack-zoom .mini { gap: 3px; }
.case-row { display: flex; align-items: center; gap: 6px; padding: 6px 0 0 8px; }
.case-row label { width: 75px; white-space: nowrap; }
.case { width: 249px; height: 31px; }
.case select { padding: 0 6px 2px; background: linear-gradient(#f0f0f0, #e3e3e3); border-color: #acacac; }
.case::after { width: 6px; height: 6px; border: solid #555; border-width: 0 1px 1px 0; right: 9px; top: 10px; transform: rotate(45deg); }
.group-name { text-align: center; color: var(--muted); }
.pointer { position: absolute; left: 2254px; top: 84px; width: 16px; height: 26px; }

/* workspace */
.workspace { display: flex; flex: 1; gap: 9px; padding: 8px 9px 0 8px; background: #fff; }
.panel { border: 1px solid var(--line); background: #fff; }
.project { width: 560px; padding-bottom: 8px; }
.panel-head { display: flex; align-items: center; gap: 9px; height: 28px; padding: 0 8px 0 6px; background: #f0f0f0; color: #444; }
.panel-head .caret { border-width: 5px 4px 0; }
.grip {
    flex: 1;
    height: 8px;
    margin: 0 4px 0 2px;
    background-image: radial-gradient(circle at 1px 1px, #b4b4b4 1px, transparent 1px), radial-gradient(circle at 3px 3px, #b4b4b4 1px, transparent 1px);
    background-size: 5px 4px;
}
.pin { width: 10px; height: 14px; }
.tabs { display: flex; align-items: flex-end; height: 31px; }
.tab {
    height: 28px;
    padding: 0 6px 2px;
    border: 1px solid #acacac;
    margin-left: -1px;
    background: linear-gradient(#f0f0f0, #e4e4e4);
    font-size: 16px;
}
.tab.active { height: 31px; padding: 0 10px 2px; background: #fff; border-bottom: 0; }
.section {
    position: relative;
    height: 36px;
    margin: 4px 4px 0 0;
    padding-left: 22px;
    background: linear-gradient(90deg, #fff 20px, #f6f1ea 80px);
    font-size: 16px;
    font-weight: 600;
    line-height: 36px;
}
.section::before { content: ""; position: absolute; left: 5px; top: 14px; border: 5px solid transparent; border-top: 6px solid #2a8be6; border-bottom: 0; }
.summary-row { display: flex; align-items: center; height: 24px; padding: 0 4px 0 31px; }
.summary-row + .section { margin-top: 0; }
.summary { flex: 1; height: 20px; margin-left: 10px; }
.summary select { border: 0; padding: 0 4px; }
.summary::before { content: ""; position: absolute; right: 0; top: 1px; width: 25px; height: 18px; border: 1px solid #777; background: linear-gradient(#f4f4f4, #ccc); pointer-events: none; }
.summary::after { right: 8px; top: 7px; border-top-color: #1c1c60; }
.props { display: grid; grid-template-columns: 1fr 401px; row-gap: 3px; padding: 1px 4px 0 31px; align-items: center; }
.props input { height: 21px; width: 100%; padding: 0 3px; border: 1px solid #cfcfcf; background: #f0f0f0; color: #262660; font-style: italic; }

/* views */
.main { display: flex; flex: 1; flex-direction: column; min-width: 0; }
.view-tabs { display: flex; align-items: flex-end; height: 39px; padding-left: 3px; border-top: 1px solid #e2e2e2; }
.view-tab {
    display: flex;
    align-items: center;
    gap: 4px;
    height: 35px;
    padding: 0 8px 4px 9px;
    margin-left: -1px;
    border: 1px solid #b5b5b5;
    border-bottom: 0;
    background: linear-gradient(#f2f2f2, #e4e4e4);
    font-size: 16px;
}
.view-tab svg { width: 26px; height: 26px; }
.view-tab.active { height: 39px; margin-bottom: -1px; padding-bottom: 8px; background: #fff; z-index: 1; }
.viewer { position: relative; flex: 1; border: 1px solid #a8a8a8; background: #fff; }
.report {
    margin: 1px 0 0 3px;
    color: #000;
    font-family: "DejaVu Sans Condensed", "Noto Sans", sans-serif;
    font-size: 15px;
    font-weight: bold;
    line-height: 18px;
}
.status-drop {
    position: absolute;
    top: 3px;
    right: 4px;
    display: flex;
    align-items: center;
    gap: 10px;
    width: 197px;
    height: 27px;
    padding-left: 2px;
    background: #ffc800;
    border: 1px solid #f0d060;
    font-size: 15px;
}
.status-drop svg { width: 24px; height: 24px; }
.model { position: absolute; left: 652px; top: 158px; width: 600px; height: 500px; }
.nodes { fill: none; stroke: #c81808; stroke-width: 15px; stroke-linecap: round; }
.labels { fill: #000; font-family: "DejaVu Sans Condensed", "Noto Sans", sans-serif; font-size: 36px; }
.axes { position: absolute; left: 1111px; top: 549px; width: 70px; height: 80px; overflow: visible; font-family: "DejaVu Sans", sans-serif; font-size: 13px; font-weight: bold; }
.cube { position: absolute; left: 37px; bottom: 38px; width: 66px; height: 64px; overflow: visible; font-family: "Liberation Serif", serif; font-size: 15px; font-weight: bold; }
.legend { position: absolute; left: 649px; bottom: 10px; width: 498px; color: #222; }
.legend-top { display: flex; align-items: center; padding-bottom: 9px; }
.legend-top strong { flex: 1; font-weight: normal; text-align: center; }
.menu-lines { width: 23px; height: 13px; margin-right: 2px; background: repeating-linear-gradient(#111 0 3px, #fff 3px 5px); }
.legend-bar { display: flex; justify-content: space-between; height: 24px; margin-left: 26px; border-bottom: 2px solid #888; }
.stop { width: 11px; background: #000; border-right: 3px solid #888; }
.ramp { flex: 1; margin: 1px 4px 0; background: linear-gradient(90deg, #00f 4%, #008000 34%, #ff0 67%, #f00 98%); }
.legend-scale { display: grid; grid-template-columns: 57px repeat(3, 1fr) 57px; margin: 2px 12px 0 27px; text-align: center; }
.legend-scale :first-child { text-align: left; }
.legend-scale :last-child { text-align: right; }

/* find panel */
.find { margin-top: 9px; }
.find .tabs { height: 28px; border-bottom: 1px solid #b5b5b5; }
.find .tab { height: 25px; font-size: 14px; }
.find .tab.active { height: 28px; margin-bottom: -1px; }
.grid { width: calc(100% - 8px); margin: 3px 4px 0; border-collapse: collapse; table-layout: fixed; border: solid #8d9aa3; border-width: 2px 1px 0; }
.grid th { height: 24px; padding: 2px 0 0 6px; border-right: 1px solid #dfe3e8; background: linear-gradient(#fff 45%, #f2f4f6); font-weight: normal; text-align: left; white-space: nowrap; }
.c-name { width: 241px; }
.c-freq { width: 110px; }
.c-period { width: 124px; }
.c-part { width: 51px; }
.c-mass { width: 81px; }
.c-bar { width: 20px; }
.dock-tabs { display: flex; height: 25px; border-top: 1px solid var(--line); }
.dock-tab { padding: 0 8px; color: #444; }
.dock-tab.active { margin-top: -1px; padding: 0 7px; border-right: 1px solid var(--line); background: #fff; color: #0a64ad; }
.statusbar { height: 31px; padding: 11px 25px 0; background: #fff; color: #777; }
```
